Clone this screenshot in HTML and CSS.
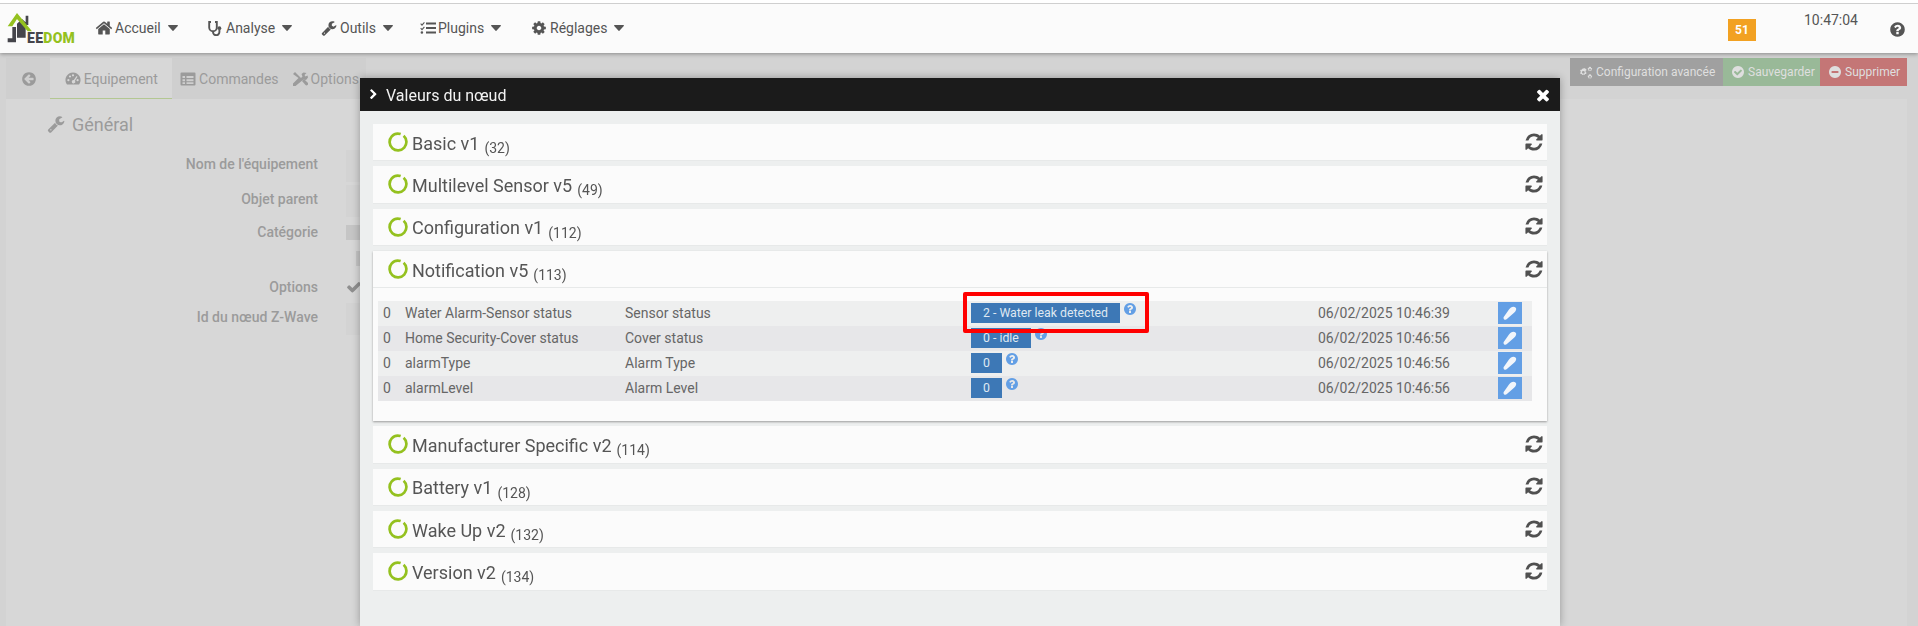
FILE: index.html
```html
<!DOCTYPE html>
<html lang="fr">
<head>
<meta charset="utf-8">
<title>Jeedom</title>
<link rel="stylesheet" href="styles.css">
</head>
<body>
<svg class="sprite" xmlns="http://www.w3.org/2000/svg">
  <symbol id="i-refresh" viewBox="0 0 1792 1792"><path d="M1639 1056q0 5-1 7-64 268-268 434.5t-478 166.5q-146 0-282.5-55t-243.5-157l-129 129q-19 19-45 19t-45-19-19-45v-448q0-26 19-45t45-19h448q26 0 45 19t19 45-19 45l-137 137q71 66 161 102t187 36q134 0 250-65t186-179q11-17 53-117 8-23 30-23h192q13 0 22.5 9.5t9.5 22.5zm25-800v448q0 26-19 45t-45 19h-448q-26 0-45-19t-19-45 19-45l138-138q-148-137-349-137-134 0-250 65t-186 179q-11 17-53 117-8 23-30 23h-199q-13 0-22.5-9.5t-9.5-22.5v-7q65-268 270-434.5t480-166.5q146 0 284 55.5t245 156.5l130-129q19-19 45-19t45 19 19 45z"/></symbol>
  <symbol id="i-help" viewBox="0 0 1792 1792"><path d="M1024 1376v-192q0-14-9-23t-23-9h-192q-14 0-23 9t-9 23v192q0 14 9 23t23 9h192q14 0 23-9t9-23zm256-672q0-88-55.5-163t-138.5-116-170-41q-243 0-371 213-15 24 8 42l132 100q7 6 19 6 16 0 25-12 53-68 86-92 34-24 86-24 48 0 85.5 26t37.5 59q0 38-20 61t-68 45q-63 28-115.5 86.5t-52.5 125.5v36q0 14 9 23t23 9h192q14 0 23-9t9-23q0-19 21.5-49.5t54.5-49.5q32-18 49-28.5t46-35 44.5-48 28-60.5 12.5-81zm384 192q0 209-103 385.5t-279.5 279.5-385.5 103-385.5-103-279.5-279.5-103-385.5 103-385.5 279.5-279.5 385.5-103 385.5 103 279.5 279.5 103 385.5z"/></symbol>
  <symbol id="i-times" viewBox="0 0 1792 1792"><path d="M1490 1322q0 40-28 68l-136 136q-28 28-68 28t-68-28l-294-294-294 294q-28 28-68 28t-68-28l-136-136q-28-28-28-68t28-68l294-294-294-294q-28-28-28-68t28-68l136-136q28-28 68-28t68 28l294 294 294-294q28-28 68-28t68 28l136 136q28 28 28 68t-28 68l-294 294 294 294q28 28 28 68z"/></symbol>
  <symbol id="i-home" viewBox="0 0 1792 1792"><path d="M1472 992v480q0 26-19 45t-45 19h-384v-384h-256v384h-384q-26 0-45-19t-19-45v-480q0-1 .5-3t.5-3l575-474 575 474q1 2 1 6zm223-69l-62 74q-8 9-21 11h-3q-13 0-21-7l-692-577-692 577q-12 8-24 7-13-2-21-11l-62-74q-8-10-7-23.5t11-21.5l719-599q32-26 76-26t76 26l244 204v-195q0-14 9-23t23-9h192q14 0 23 9t9 23v408l219 182q10 8 11 21.5t-7 23.5z"/></symbol>
  <symbol id="i-wrench" viewBox="0 0 1792 1792"><path d="M448 1472q0-26-19-45t-45-19-45 19-19 45 19 45 45 19 45-19 19-45zm644-420l-682 682q-37 37-90 37-52 0-91-37l-106-108q-38-36-38-90 0-53 38-91l681-681q39 98 114.5 173.5t173.5 114.5zm634-435q0 39-23 106-47 134-164.5 217.5t-258.5 83.5q-185 0-316.5-131.5t-131.5-316.5 131.5-316.5 316.5-131.5q58 0 121.5 16.5t107.5 46.5q16 11 16 28t-16 28l-293 169v224l193 107q5-3 79-48.5t135.5-81 70.5-35.5q15 0 23.5 10t8.5 25z"/></symbol>
  <symbol id="i-cog" viewBox="0 0 1792 1792"><path d="M1152 896q0-106-75-181t-181-75-181 75-75 181 75 181 181 75 181-75 75-181zm512-109v222q0 12-8 23t-20 13l-185 28q-19 54-39 91 35 50 107 138 10 12 10 25t-9 23q-27 37-99 108t-94 71q-12 0-26-9l-138-108q-44 23-91 38-16 136-29 186-7 28-36 28h-222q-14 0-24.5-8.5t-11.5-21.5l-28-184q-49-16-90-37l-141 107q-10 9-25 9-14 0-25-11-126-114-165-168-7-10-7-23 0-12 8-23 15-21 51-66.5t54-70.5q-27-50-41-99l-183-27q-13-2-21-12.5t-8-23.5v-222q0-12 8-23t19-13l186-28q14-46 39-92-40-57-107-138-10-12-10-24 0-10 9-23 26-36 98.5-107.5t94.5-71.5q13 0 26 10l138 107q44-23 91-38 16-136 29-186 7-28 36-28h222q14 0 24.5 8.5t11.5 21.5l28 184q49 16 90 37l142-107q9-9 24-9 13 0 25 10 129 119 165 170 7 8 7 22 0 12-8 23-15 21-51 66.5t-54 70.5q26 50 41 98l183 28q13 2 21 12.5t8 23.5z"/></symbol>
  <symbol id="i-check" viewBox="0 0 1792 1792"><path d="M1412 734q0-28-18-46l-91-90q-19-19-45-19t-45 19l-408 407-226-226q-19-19-45-19t-45 19l-91 90q-18 18-18 46 0 27 18 45l362 362q19 19 45 19 27 0 46-19l543-543q18-18 18-45zm252 162q0 209-103 385.5t-279.5 279.5-385.5 103-385.5-103-279.5-279.5-103-385.5 103-385.5 279.5-279.5 385.5-103 385.5 103 279.5 279.5 103 385.5z"/></symbol>
  <symbol id="i-minus" viewBox="0 0 1792 1792"><path d="M1344 960v-128q0-26-19-45t-45-19h-768q-26 0-45 19t-19 45v128q0 26 19 45t45 19h768q26 0 45-19t19-45zm320-64q0 209-103 385.5t-279.5 279.5-385.5 103-385.5-103-279.5-279.5-103-385.5 103-385.5 279.5-279.5 385.5-103 385.5 103 279.5 279.5 103 385.5z"/></symbol>
  <symbol id="i-back" viewBox="0 0 1792 1792"><path d="M1408 960v-128q0-26-18.5-45t-45.5-19h-502l189-189q19-19 19-45t-19-45l-91-91q-18-18-45-18t-45 18l-362 362-91 91q-18 18-18 45t18 45l91 91 362 362q18 18 45 18t45-18l91-91q18-18 18-45t-18-45l-189-189h502q27 0 45.5-19t18.5-45zm256-64q0 209-103 385.5t-279.5 279.5-385.5 103-385.5-103-279.5-279.5-103-385.5 103-385.5 279.5-279.5 385.5-103 385.5 103 279.5 279.5 103 385.5z"/></symbol>
  <symbol id="i-chevron" viewBox="0 0 1792 1792"><path d="M1363 877l-742 742q-19 19-45 19t-45-19l-166-166q-19-19-19-45t19-45l531-531-531-531q-19-19-19-45t19-45l166-166q19-19 45-19t45 19l742 742q19 19 19 45t-19 45z"/></symbol>
  <symbol id="i-caret" viewBox="0 0 10 6"><path d="M0.6 0h8.8c.5 0 .7.5.4.9L5.4 5.7c-.2.3-.6.3-.8 0L.2.9C-.1.5.1 0 .6 0z"/></symbol>
  <symbol id="i-steth" viewBox="0 0 16 16"><path d="M4 2H2.2V7.5a3.800 3.800 0 0 0 7.600 0V2H8M6 11.500v.5a3.200 3.200 0 0 0 6.400 0V10" fill="none" stroke="currentColor" stroke-width="1.900"/><circle cx="12.400" cy="8.200" r="1.900"/></symbol>
  <symbol id="i-list" viewBox="0 0 16 16"><path d="M6 2.500h10v2H6zM6 7h10v2H6zM6 11.500h10v2H6zM1 3.200l1 1 2-2.200.8.7L2 6 .3 4zM1 7.700l1 1 2-2.200.8.7L2 10.500.3 8.500zM.6 12.500a1.300 1.300 0 1 1 2.600 0 1.300 1.300 0 0 1-2.600 0z"/></symbol>
  <symbol id="i-table" viewBox="0 0 16 16"><path d="M1.500 1.500h13a1 1 0 0 1 1 1v11a1 1 0 0 1-1 1h-13a1 1 0 0 1-1-1v-11a1 1 0 0 1 1-1zM2.500 5v2h2.500V5zm4 0v2h7V5zm-4 3.200v2h2.500v-2zm4 0v2h7v-2zm-4 3.100v1.700h2.500v-1.700zm4 0v1.700h7v-1.700z" fill-rule="evenodd"/></symbol>
  <symbol id="i-gauge" viewBox="0 0 16 16"><path d="M8 1.500a7.500 7.500 0 0 1 6.400 11.400c-.2.4-.6.6-1 .6H2.600c-.4 0-.8-.2-1-.6A7.500 7.500 0 0 1 8 1.500zM3.400 8.100a1.100 1.100 0 1 0 0 2.200 1.100 1.100 0 0 0 0-2.200zM5 4.400a1.100 1.100 0 1 0 0 2.200 1.100 1.100 0 0 0 0-2.200zM8 3.200a1.100 1.100 0 1 0 0 2.200 1.100 1.100 0 0 0 0-2.200zM11.600 5L8.800 9a1.700 1.700 0 1 0 1.100.7l2.600-4zM12.600 8.100a1.100 1.100 0 1 0 0 2.200 1.100 1.100 0 0 0 0-2.200z" fill-rule="evenodd"/></symbol>
  <symbol id="i-cogs" viewBox="0 0 18 16"><path d="M6 3.400l1.200-.5.7 1 1.200-.1.5 1.600-1 .7v1.400l1 .7-.5 1.600-1.200-.1-.7 1-1.200-.5-1.200.5-.7-1-1.200.1-.5-1.600 1-.7V7.100l-1-.7.5-1.600 1.200.1.7-1zM6 6.200a1.600 1.600 0 1 0 0 3.200 1.600 1.600 0 0 0 0-3.200z" fill-rule="evenodd"/><path d="M13.500 1.500l1 .3.3 1 1 .3.1 1-.8.7.1 1-.9.5-.9-.5-.9.5-.9-.5.1-1-.8-.7.1-1 1-.3.3-1zM13.500 3.500a1 1 0 1 0 0 2 1 1 0 0 0 0-2zM13.500 10l1 .3.3 1 1 .3.1 1-.8.7.1 1-.9.5-.9-.5-.9.5-.9-.5.1-1-.8-.7.1-1 1-.3.3-1zM13.500 12a1 1 0 1 0 0 2 1 1 0 0 0 0-2z" fill-rule="evenodd"/></symbol>
  <symbol id="i-tools" viewBox="0 0 16 16"><path d="M1 3l2-2 6 6 1.500-1.500-1-2.500 2-1.500 3 .5-2 2 1 1.500 2-1 .5 2-2 2.500-2.500-.5L3.500 15H1v-2.500L6.500 7z"/><path d="M10 10l2-2 3.500 3.500a1.400 1.400 0 0 1-2 2.500z"/></symbol>
  <symbol id="i-pen" viewBox="0 0 16 16"><path d="M2 14.200c-.7-.7-.6-1.600-.1-2.400L7 4.600C8 3 9.800 1.800 11.500 1.800c1.500 0 2.700.9 2.700 2.300 0 1.500-1.100 3-2.700 4.200l-6.600 5.800c-.9.800-2.100.9-2.900.1z"/></symbol>
  <symbol id="i-tick" viewBox="0 0 1792 1792"><path d="M1671 566q0 40-28 68l-724 724-136 136q-28 28-68 28t-68-28l-136-136-362-362q-28-28-28-68t28-68l136-136q28-28 68-28t68 28l294 295 656-657q28-28 68-28t68 28l136 136q28 28 28 68z"/></symbol>
  <symbol id="ring" viewBox="0 0 20 20"><circle cx="10" cy="10" r="8.400" fill="none" stroke-width="2.700" stroke-dasharray="49 3.800" transform="rotate(-48 10 10)"/></symbol>
</svg>

<header class="topbar">
  <a class="logo">
    <svg class="logo-mark" viewBox="20 24 80 100" aria-hidden="true">
      <path class="logo-dark" d="M50 62L65 48l11 10V38h8v28h-8v38H50z"/>
      <path class="logo-dark" d="M36 72h11v46H22v-12h14z"/>
      <path class="logo-green" d="M22 70L50 30l45 55H82L50 48 36 70z"/>
    </svg>
    <span class="logo-text">EE<b>DOM</b></span>
  </a>
  <nav class="menu">
    <a class="menu-item item-home"><svg class="ico"><use href="#i-home"/></svg>Accueil<svg class="caret"><use href="#i-caret"/></svg></a>
    <a class="menu-item item-ana"><svg class="ico"><use href="#i-steth"/></svg>Analyse<svg class="caret"><use href="#i-caret"/></svg></a>
    <a class="menu-item item-out"><svg class="ico"><use href="#i-wrench"/></svg>Outils<svg class="caret"><use href="#i-caret"/></svg></a>
    <a class="menu-item item-plug"><svg class="ico"><use href="#i-list"/></svg>Plugins<svg class="caret"><use href="#i-caret"/></svg></a>
    <a class="menu-item item-reg"><svg class="ico"><use href="#i-cog"/></svg>Réglages<svg class="caret"><use href="#i-caret"/></svg></a>
  </nav>
  <div class="status">
    <span class="badge-count">51</span>
    <span class="clock">10:47:04</span>
    <svg class="help"><use href="#i-help"/></svg>
  </div>
</header>

<main class="page">
  <div class="page-head">
    <div class="tabs">
      <a class="tab tab-back"><svg class="ico"><use href="#i-back"/></svg></a>
      <a class="tab tab-active"><svg class="ico"><use href="#i-gauge"/></svg>Equipement</a>
      <a class="tab"><svg class="ico"><use href="#i-table"/></svg>Commandes</a>
      <a class="tab"><svg class="ico"><use href="#i-tools"/></svg>Options</a>
    </div>
    <div class="actions">
      <a class="act act-grey"><svg class="ico act-cogs"><use href="#i-cogs"/></svg>Configuration avancée</a>
      <a class="act act-green"><svg class="ico"><use href="#i-check"/></svg>Sauvegarder</a>
      <a class="act act-red"><svg class="ico"><use href="#i-minus"/></svg>Supprimer</a>
    </div>
  </div>
  <section class="sheet">
    <h3 class="legend"><svg class="legend-ico"><use href="#i-wrench"/></svg>Général</h3>
    <div class="field f-name"><label>Nom de l'équipement</label><span class="input tall"></span></div>
    <div class="field f-parent"><label>Objet parent</label><span class="input tall"></span></div>
    <div class="field f-cat"><label>Catégorie</label><span class="input small"></span></div>
    <div class="field f-cat2"><label></label><span class="input small shifted"></span></div>
    <div class="field f-opt"><label>Options</label><svg class="opt-tick"><use href="#i-tick"/></svg></div>
    <div class="field f-id"><label>Id du nœud Z-Wave</label><span class="input tall"></span></div>
  </section>
</main>

<div class="modal">
  <div class="modal-head">
    <svg class="modal-chevron"><use href="#i-chevron"/></svg>
    <span class="modal-title">Valeurs du nœud</span>
    <svg class="modal-close"><use href="#i-times"/></svg>
  </div>
  <div class="modal-body">
    <div class="panel"><div class="panel-head"><svg class="ring"><use href="#ring"/></svg><span class="panel-title">Basic v1</span><small>(32)</small><svg class="refresh"><use href="#i-refresh"/></svg></div></div>
    <div class="panel"><div class="panel-head"><svg class="ring"><use href="#ring"/></svg><span class="panel-title">Multilevel Sensor v5</span><small>(49)</small><svg class="refresh"><use href="#i-refresh"/></svg></div></div>
    <div class="panel"><div class="panel-head"><svg class="ring"><use href="#ring"/></svg><span class="panel-title">Configuration v1</span><small>(112)</small><svg class="refresh"><use href="#i-refresh"/></svg></div></div>
    <div class="panel panel-open">
      <div class="panel-head"><svg class="ring"><use href="#ring"/></svg><span class="panel-title">Notification v5</span><small>(113)</small><svg class="refresh"><use href="#i-refresh"/></svg></div>
      <div class="panel-body">
        <div class="values">
          <div class="row"><span>0</span><span>Water Alarm-Sensor status</span><span>Sensor status</span><span class="val"><b class="chip">2 - Water leak detected</b><svg class="q"><use href="#i-help"/></svg></span><span>06/02/2025 10:46:39</span><a class="edit"><svg><use href="#i-pen"/></svg></a></div>
          <div class="row"><span>0</span><span>Home Security-Cover status</span><span>Cover status</span><span class="val"><b class="chip">0 - idle</b><svg class="q"><use href="#i-help"/></svg></span><span>06/02/2025 10:46:56</span><a class="edit"><svg><use href="#i-pen"/></svg></a></div>
          <div class="row"><span>0</span><span>alarmType</span><span>Alarm Type</span><span class="val"><b class="chip">0</b><svg class="q"><use href="#i-help"/></svg></span><span>06/02/2025 10:46:56</span><a class="edit"><svg><use href="#i-pen"/></svg></a></div>
          <div class="row"><span>0</span><span>alarmLevel</span><span>Alarm Level</span><span class="val"><b class="chip">0</b><svg class="q"><use href="#i-help"/></svg></span><span>06/02/2025 10:46:56</span><a class="edit"><svg><use href="#i-pen"/></svg></a></div>
          <div class="callout"></div>
        </div>
      </div>
    </div>
    <div class="panel"><div class="panel-head"><svg class="ring"><use href="#ring"/></svg><span class="panel-title">Manufacturer Specific v2</span><small>(114)</small><svg class="refresh"><use href="#i-refresh"/></svg></div></div>
    <div class="panel"><div class="panel-head"><svg class="ring"><use href="#ring"/></svg><span class="panel-title">Battery v1</span><small>(128)</small><svg class="refresh"><use href="#i-refresh"/></svg></div></div>
    <div class="panel"><div class="panel-head"><svg class="ring"><use href="#ring"/></svg><span class="panel-title">Wake Up v2</span><small>(132)</small><svg class="refresh"><use href="#i-refresh"/></svg></div></div>
    <div class="panel"><div class="panel-head"><svg class="ring"><use href="#ring"/></svg><span class="panel-title">Version v2</span><small>(134)</small><svg class="refresh"><use href="#i-refresh"/></svg></div></div>
  </div>
</div>
</body>
</html>
```

FILE: styles.css
```css
* { box-sizing: border-box; }
html, body { height: 100%; }
body {
  margin: 0;
  overflow: hidden;
  background: #d3d3d3;
  font-family: Roboto, "Liberation Sans", sans-serif;
  font-size: 14px;
  color: #555;
}
.sprite { display: none; }
a { color: inherit; text-decoration: none; }

/* top bar */
.topbar {
  position: relative;
  z-index: 3;
  display: flex;
  height: 53px;
  background: #fbfbfb;
  border-top: 3px solid #fff;
  box-shadow: inset 0 1px 0 #cfcfcf, 0 1px 4px rgba(0, 0, 0, .35);
}
.logo { display: flex; align-items: flex-end; width: 96px; padding: 0 0 9px 7px; }
.logo-mark { width: 26.67px; height: 33.33px; margin-right: -6.67px; flex: none; }
.logo-dark { fill: #45454b; }
.logo-green { fill: #94c11f; }
.logo-text { position: relative; font-weight: 900; font-size: 14px; line-height: 12px; letter-spacing: .3px; color: #45454b; }
.logo-text b { color: #94c11f; font-weight: 900; }
.menu { display: flex; align-items: flex-start; padding-top: 16px; }
.menu-item { display: flex; align-items: center; height: 18px; }
.ico { width: 16px; height: 16px; fill: currentColor; margin-right: 3px; flex: none; }
.caret { width: 10px; height: 6px; margin-left: 7px; fill: currentColor; flex: none; }
.item-home { width: 111px; }
.item-home .ico { width: 18px; height: 18px; margin: 0 2px 0 -1px; }
.item-ana { width: 114px; }
.item-out { width: 99px; }
.item-plug { width: 111px; }
.item-plug .ico { margin-right: 2px; }
.status { margin-left: auto; display: flex; align-items: flex-start; padding-right: 12px; }
.badge-count {
  width: 28px; height: 22px; margin-top: 16px;
  background: #f2a122; color: #fff; font-weight: 700; font-size: 12px;
  display: flex; align-items: center; justify-content: center;
}
.clock { margin: 9px 0 0 48px; line-height: 16px; font-weight: 400; }
.help { width: 17px; height: 17px; margin: 18px 0 0 31px; fill: #555; }

/* page behind the dialog */
.page { color: #9b9b9b; padding: 5px 11px 0 6px; }
.page-head { display: flex; justify-content: space-between; }
.tabs { display: flex; width: 360px; height: 41px; background: #cfcfcf; }
.tab { display: flex; align-items: center; padding: 1px 7px 0 0; white-space: nowrap; }
.tab .ico { margin-right: 3px; }
.tab-back { width: 44px; padding-left: 15px; }
.tab-active {
  width: 124px; padding-left: 15px; margin-right: 8px;
  background: #d7d7d7; border-bottom: 1px solid #b3c792;
}
.tab-active + .tab { margin-right: 6px; }
.actions { display: flex; height: 28px; }
.act { display: flex; align-items: center; padding: 0 0 0 8px; color: #dfdfdf; font-size: 12px; white-space: nowrap; }
.act .ico { margin-right: 3px; width: 14px; height: 14px; }
.act .act-cogs { width: 16px; height: 15px; margin-right: 2px; }
.act-grey { background: #a0a0a0; width: 153px; }
.act-green { background: #99b998; width: 97px; }
.act-red { background: #c47676; width: 87px; }
.sheet { background: #d7d7d7; height: 527px; padding-top: 13px; }
.legend {
  display: flex; align-items: center; margin: 0 0 14px 41px; height: 24px;
  font-size: 18px; font-weight: 400;
}
.legend-ico { width: 18px; height: 18px; fill: currentColor; margin-right: 7px; }
.field { display: flex; align-items: flex-start; font-weight: 500; }
.field label { width: 312px; text-align: right; margin-right: 28px; flex: none; }
.input { display: block; width: 40px; background: #d3d3d3; }
.input.tall { height: 32px; }
.input.small { height: 15px; background: #c5c5c5; }
.input.shifted { margin-left: 10px; }
.f-name { height: 35px; }
.f-name label, .f-parent label, .f-id label { line-height: 28px; }
.f-parent { height: 40px; }
.f-cat { height: 26px; }
.f-cat label { line-height: 14px; }
.f-cat2 { height: 28px; }
.f-opt { height: 24px; }
.f-opt label { line-height: 16px; }
.opt-tick { width: 16px; height: 16px; fill: #8f8f8f; }

/* dialog */
.modal {
  position: fixed;
  z-index: 5;
  left: 360px; top: 78px; width: 1200px; bottom: 0;
  background: #edefef;
  box-shadow: 0 0 8px rgba(0, 0, 0, .3);
}
.modal-head {
  display: flex; align-items: center;
  height: 33px; padding: 0 8px;
  background: #1b1b1b; color: #f2f2f2;
  font-size: 16px;
}
.modal-chevron { width: 11px; height: 11px; fill: #fff; margin-right: 7px; }
.modal-title { flex: 1; margin-top: 2px; }
.modal-close { width: 18px; height: 18px; fill: #fff; margin-right: 0; }
.modal-body { padding: 13px 13px 0; }
.panel {
  background: #fbfbfb; margin-bottom: 5px;
  border-bottom: 1px solid #e7e9e9;
}
.panel-open { border-bottom: 0; box-shadow: 0 1px 2px rgba(0, 0, 0, .35); }
.panel-head {
  display: flex; align-items: center;
  height: 36.33px; padding: 0 3px 0 15px;
}
.panel-open .panel-head { height: 37.33px; border-bottom: 1px solid #e7e9e9; }
.ring { width: 20px; height: 20px; stroke: #94c11f; margin-right: 4px; flex: none; }
.panel-title { font-size: 18px; color: #555; margin-top: 2px; }
.panel-head small { font-size: 14px; color: #555; margin: 12px 0 0 5px; }
.refresh { width: 20px; height: 20px; margin-left: auto; fill: #505050; margin-top: -1px; }
.panel-body { padding: 13px 15px 20px 5px; height: 133px; }
.values { position: relative; }
.row {
  display: grid;
  grid-template-columns: 22px 220px 346px 347px 180px 39px;
  height: 25px; line-height: 25px;
  color: #666;
  background: #eeefef;
}
.row:nth-child(even) { background: #e7e7e9; }
.row > span { padding-left: 5px; white-space: nowrap; }
.val { display: flex; align-items: flex-start; }
.chip {
  display: block; height: 20px; line-height: 20px; margin-top: 2px;
  padding: 0 12px; background: #3d78b6; color: #dfe8f2;
  font-weight: 400; font-size: 12.3px;
}
.q { width: 14px; height: 14px; margin: 1px 0 0 3px; fill: #639fe5; }
.edit {
  width: 24px; height: 22px; margin: 1px 0 0 5px;
  background: #639fe5; display: flex; align-items: center; justify-content: center;
}
.edit svg { width: 16px; height: 16px; fill: #f2f6fb; }
.callout {
  position: absolute; left: 585px; top: -9px; width: 186px; height: 41px;
  border: 4px solid #f00; border-radius: 2px;
}
```
